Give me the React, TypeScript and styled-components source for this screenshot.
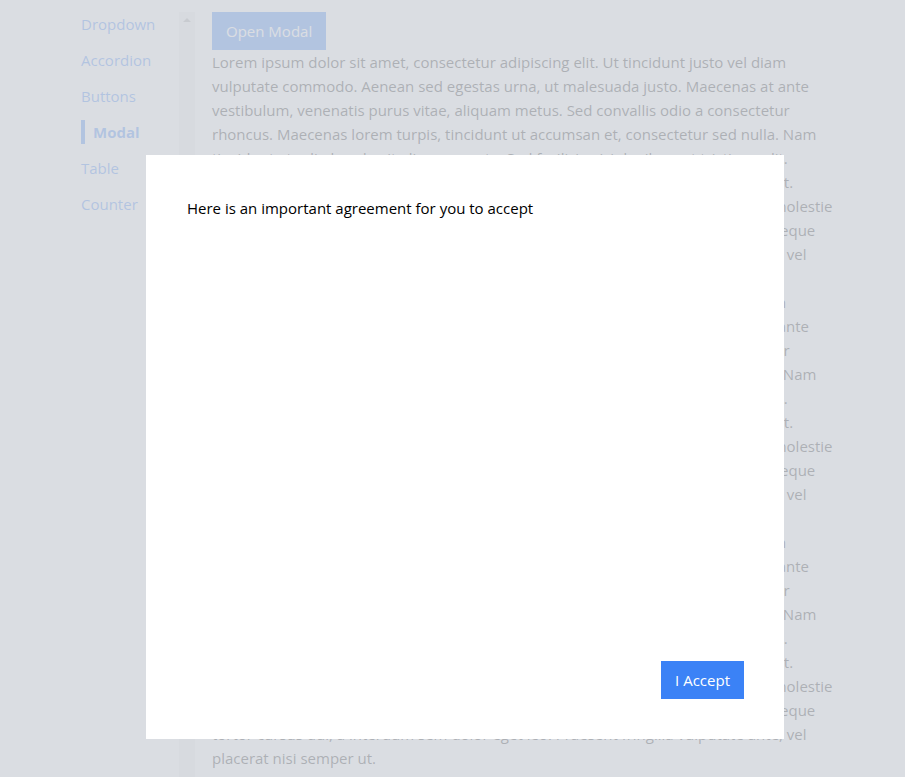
import React from "react";
import styled, { createGlobalStyle } from "styled-components";

const GlobalStyle = createGlobalStyle`
  html, body {
    margin: 0;
    padding: 0;
    overflow: hidden;
    background: #ffffff;
  }
  body {
    font-family: "Open Sans", "Noto Sans", sans-serif;
    font-size: 15px;
    line-height: 24px;
    color: #222222;
  }
`;

const Page = styled.div`
  display: flex;
  align-items: flex-start;
  padding: 12px 0 0 81px;
  height: 100vh;
  box-sizing: border-box;
`;

const Sidebar = styled.aside`
  display: flex;
  flex: 0 0 auto;
`;

const Nav = styled.nav`
  width: 98px;
  display: flex;
  flex-direction: column;
  gap: 12px;
`;

const NavLink = styled.a<{ $active?: boolean }>`
  display: block;
  color: #3b82f6;
  text-decoration: none;
  line-height: 24px;
  font-weight: ${(p) => (p.$active ? 700 : 400)};
  border-left: ${(p) => (p.$active ? "4px solid #3b82f6" : "none")};
  padding-left: ${(p) => (p.$active ? "8px" : "0")};
`;

const ScrollTrack = styled.div`
  width: 16px;
  height: calc(100vh - 12px);
  background: #f1f1f1;
  display: flex;
  justify-content: center;
  padding-top: 6px;
  box-sizing: border-box;
`;

const ScrollArrow = styled.div`
  width: 0;
  height: 0;
  border-left: 4px solid transparent;
  border-right: 4px solid transparent;
  border-bottom: 4px solid #a3a3a3;
`;

const Content = styled.main`
  width: 630px;
  margin-left: 17px;
`;

const Button = styled.button`
  font-family: "Open Sans", "Noto Sans", sans-serif;
  font-size: 15px;
  line-height: 24px;
  background: #3b82f6;
  color: #ffffff;
  border: none;
  border-radius: 0;
  padding: 7px 14px;
  cursor: pointer;
`;

const Paragraph = styled.p`
  margin: 0;
`;

const Overlay = styled.div`
  position: fixed;
  inset: 0;
  background: rgba(209, 213, 219, 0.8);
  display: flex;
  align-items: flex-start;
  padding: 155px 0 0 146px;
  box-sizing: border-box;
`;

const Modal = styled.div`
  width: 638px;
  height: 584px;
  background: #ffffff;
  box-sizing: border-box;
  padding: 41px 40px 40px 41px;
  display: flex;
  flex-direction: column;
  justify-content: space-between;
`;

const ModalText = styled.p`
  margin: 0;
  color: #000000;
`;

const ModalFooter = styled.div`
  display: flex;
  justify-content: flex-end;
`;

const LOREM =
  "Lorem ipsum dolor sit amet, consectetur adipiscing elit. Ut tincidunt justo vel diam vulputate commodo. Aenean sed egestas urna, ut malesuada justo. Maecenas at ante vestibulum, venenatis purus vitae, aliquam metus. Sed convallis odio a consectetur rhoncus. Maecenas lorem turpis, tincidunt ut accumsan et, consectetur sed nulla. Nam tincidunt at odio hendrerit aliquam porta. Sed facilisis nisi dapibus, ut tristique elit. Pellentesque habitant morbi tristique senectus et netus et malesuada fames ac est. Vestibulum ultrices sem nec justo laoreet, eu pretium ac lacus, sit amet tellus ac molestie curabitur venenatis lacinia sapien, eget sollicitudin nunc feugiat at. Vivamus sed neque tortor cursus dui, a interdum sem dolor eget leo. Praesent fringilla vulputate ante, vel placerat nisi semper ut.";

const links = ["Dropdown", "Accordion", "Buttons", "Modal", "Table", "Counter"];

export default function App() {
  return (
    <>
      <GlobalStyle />
      <Page>
        <Sidebar>
          <Nav>
            {links.map((l) => (
              <NavLink key={l} href="#" $active={l === "Modal"}>
                {l}
              </NavLink>
            ))}
          </Nav>
          <ScrollTrack>
            <ScrollArrow />
          </ScrollTrack>
        </Sidebar>
        <Content>
          <Button>Open Modal</Button>
          {[0, 1, 2, 3].map((i) => (
            <Paragraph key={i}>{LOREM}</Paragraph>
          ))}
        </Content>
      </Page>
      <Overlay>
        <Modal>
          <ModalText>Here is an important agreement for you to accept</ModalText>
          <ModalFooter>
            <Button>I Accept</Button>
          </ModalFooter>
        </Modal>
      </Overlay>
    </>
  );
}
